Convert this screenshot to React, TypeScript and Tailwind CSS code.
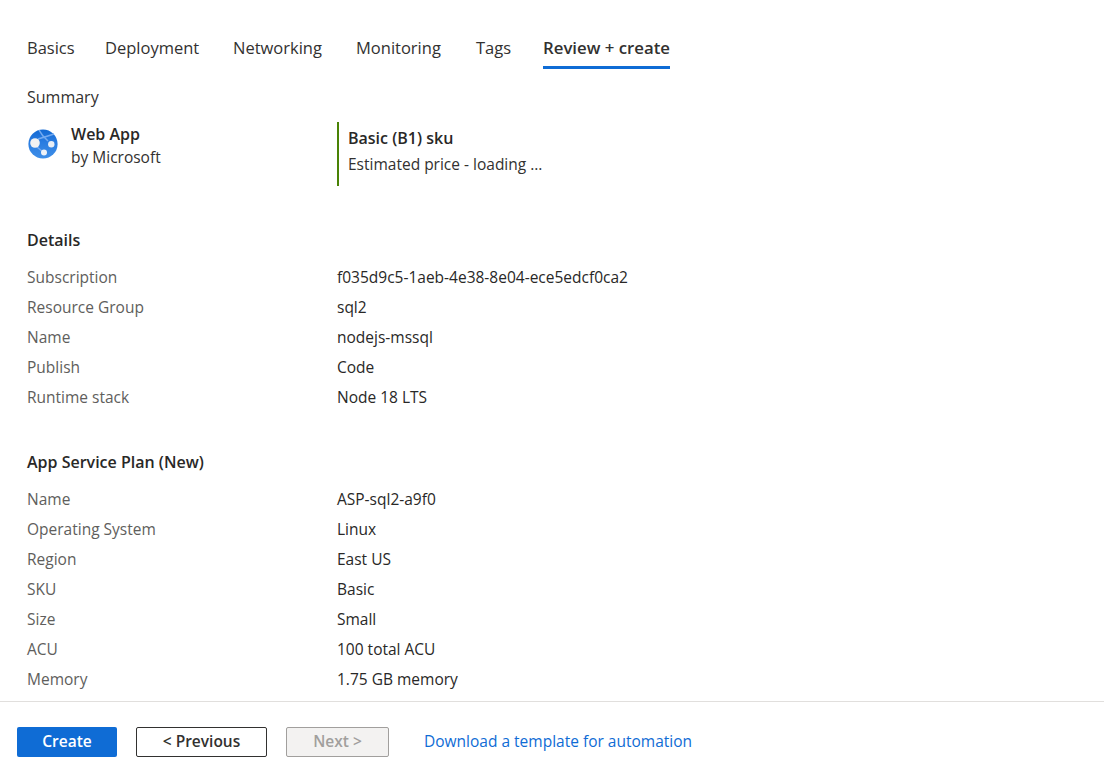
import React from 'react';

const tabs = [
    {name: 'Basics', width: 'w-[78px]'},
    {name: 'Deployment', width: 'w-[128px]'},
    {name: 'Networking', width: 'w-[123px]'},
    {name: 'Monitoring', width: 'w-[120px]'},
    {name: 'Tags', width: 'w-[67px]'},
];

const details = [
    ['Subscription', 'f035d9c5-1aeb-4e38-8e04-ece5edcf0ca2'],
    ['Resource Group', 'sql2'],
    ['Name', 'nodejs-mssql'],
    ['Publish', 'Code'],
    ['Runtime stack', 'Node 18 LTS'],
];

const plan = [
    ['Name', 'ASP-sql2-a9f0'],
    ['Operating System', 'Linux'],
    ['Region', 'East US'],
    ['SKU', 'Basic'],
    ['Size', 'Small'],
    ['ACU', '100 total ACU'],
    ['Memory', '1.75 GB memory'],
];

const WebAppIcon = () => (
    <svg width="30" height="30" viewBox="0 0 30 30" className="shrink-0">
        <defs>
            <linearGradient id="webapp" x1="0" y1="0" x2="0" y2="1">
                <stop offset="0" stopColor="#1269d3" />
                <stop offset="0.45" stopColor="#2a7de1" />
                <stop offset="1" stopColor="#3f8fe8" />
            </linearGradient>
        </defs>
        <circle cx="15" cy="15" r="14.6" fill="url(#webapp)" />
        <path d="M11 1 Q14 7 20 12 M10 10 Q17 8 26 5 M9 18 L15 23" stroke="#74aaf0" strokeWidth="1.6" fill="none" />
        <circle cx="7" cy="14" r="4.8" fill="#f2f2f2" />
        <circle cx="23.3" cy="15.3" r="3.2" fill="#e8eef6" />
        <circle cx="16" cy="23.5" r="3" fill="#eef2f8" />
    </svg>
);

const Row = ({label, value}: {label: string, value: string}) => (
    <div className="flex h-[30px] items-center">
        <span className="w-[310px] text-[#605e5c]">{label}</span>
        <span className="text-[#292827]">{value}</span>
    </div>
);

const App = () => {
    return (
        <div className="flex h-screen flex-col overflow-hidden bg-white text-[15.5px] text-[#323130] [font-family:'Open_Sans','Noto_Sans',sans-serif]">
            <div className="flex-1 overflow-hidden pl-[27px]">
                <div className="flex pt-[28px] text-[16.5px]">
                    {tabs.map((tab) => (
                        <div key={tab.name} className={`h-[41px] pt-[8px] ${tab.width}`}>{tab.name}</div>
                    ))}
                    <div className="h-[41px] border-b-[3px] border-[#0f6cd5] pt-[7px] text-[16.8px] font-semibold">Review + create</div>
                </div>

                <div className="mt-[17px] text-[16px] leading-[22px]">Summary</div>

                <div className="mt-[14px] flex h-[64px]">
                    <div className="flex w-[310px] gap-[14px]">
                        <div className="pl-[1px] pt-[7px]"><WebAppIcon /></div>
                        <div className="pt-[1px] -ml-[1px]">
                            <div className="text-[16px] leading-[22px] font-semibold text-[#292827]">Web App</div>
                            <div className="leading-[24px]">by Microsoft</div>
                        </div>
                    </div>
                    <div className="border-l-2 border-[#498205] pl-[9px]">
                        <div className="pt-[4px] text-[16px] leading-[24px] font-semibold text-[#292827]">Basic (B1) sku</div>
                        <div className="mt-[2px] leading-[24px]">Estimated price - loading ...</div>
                    </div>
                </div>

                <div className="mt-[43px] text-[16px] leading-[22px] font-semibold text-[#292827]">Details</div>
                <div className="mt-[12px]">
                    {details.map(([label, value]) => (
                        <Row key={label} label={label} value={value} />
                    ))}
                </div>

                <div className="mt-[38px] text-[16px] leading-[22px] font-semibold text-[#292827]">App Service Plan (New)</div>
                <div className="mt-[12px]">
                    {plan.map(([label, value]) => (
                        <Row key={label} label={label} value={value} />
                    ))}
                </div>
            </div>

            <div className="flex h-[72px] shrink-0 items-start border-t border-[#e1dfdd] bg-white pt-[25px] pl-[17px]">
                <button className="h-[30px] w-[100px] rounded-[2px] bg-[#0f6cd5] pb-[1px] font-semibold text-white">Create</button>
                <button className="ml-[19px] h-[30px] w-[131px] rounded-[2px] border border-[#323130] pb-[1px] font-semibold">&lt; Previous</button>
                <button className="ml-[19px] h-[30px] w-[103px] rounded-[2px] border border-[#a19f9d] bg-[#f3f2f1] pb-[1px] font-semibold text-[#a19f9d]">Next &gt;</button>
                <a className="ml-[35px] flex h-[30px] items-center pb-[1px] text-[#0f6cd5]">Download a template for automation</a>
            </div>
        </div>
    );
};

export default App;
